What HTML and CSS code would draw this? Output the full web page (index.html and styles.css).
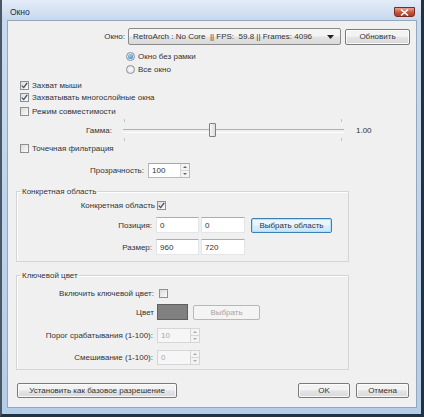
FILE: index.html
```html
<!DOCTYPE html>
<html lang="ru">
<head>
    <meta charset="UTF-8">
    <title>Окно</title>
    <link rel="stylesheet" href="styles.css">
</head>
<body>
    <div class="window">
        <div class="titlebar">
            <span class="title">Окно</span>
            <span class="close">
                <svg width="9" height="7" viewBox="0 0 9 7"><path d="M1 0.5 L8 6.5 M8 0.5 L1 6.5" stroke="#fff" stroke-width="1.6"/></svg>
            </span>
        </div>

        <div class="client">
            <!-- выбор окна -->
            <div class="row row-combo">
                <span class="lbl lbl-window">Окно:</span>
                <div class="combo">
                    <span>RetroArch : No Core&nbsp; || FPS:&nbsp; 59.8 || Frames: 4096</span>
                    <svg width="7" height="4" viewBox="0 0 7 4"><path d="M0 0 H7 L3.5 4 Z" fill="#222"/></svg>
                </div>
                <button class="btn btn-refresh">Обновить</button>
            </div>

            <div class="radios">
                <div class="opt"><span class="radio on"></span>Окно без рамки</div>
                <div class="opt"><span class="radio"></span>Все окно</div>
            </div>

            <div class="checks">
                <div class="opt"><span class="check on"><svg width="7" height="7" viewBox="0 0 7 7"><path d="M0.8 3.6 L2.7 5.6 L6.2 0.8" stroke="#3f4c63" stroke-width="1.3" fill="none"/></svg></span>Захват мыши</div>
                <div class="opt"><span class="check on"><svg width="7" height="7" viewBox="0 0 7 7"><path d="M0.8 3.6 L2.7 5.6 L6.2 0.8" stroke="#3f4c63" stroke-width="1.3" fill="none"/></svg></span>Захватывать многослойные окна</div>
                <div class="opt opt-gap"><span class="check"></span>Режим совместимости</div>
            </div>

            <!-- гамма -->
            <div class="row row-gamma">
                <span class="lbl lbl-gamma">Гамма:</span>
                <div class="slider">
                    <span class="thumb"></span>
                </div>
                <span class="slider-val">1.00</span>
            </div>

            <div class="opt opt-filter"><span class="check"></span>Точечная фильтрация</div>

            <div class="row row-opacity">
                <span class="lbl lbl-opacity">Прозрачность:</span>
                <div class="spin">
                    <span class="val">100</span>
                    <div class="arrows">
                        <span class="up"></span>
                        <span class="down"></span>
                    </div>
                </div>
            </div>

            <!-- конкретная область -->
            <fieldset class="group group-area">
                <legend>Конкретная область</legend>
                <div class="row row-area-check">
                    <span class="lbl lbl-area">Конкретная область</span>
                    <span class="check on"><svg width="7" height="7" viewBox="0 0 7 7"><path d="M0.8 3.6 L2.7 5.6 L6.2 0.8" stroke="#3f4c63" stroke-width="1.3" fill="none"/></svg></span>
                </div>
                <div class="row row-field">
                    <span class="lbl lbl-pos">Позиция:</span>
                    <span class="field f-x">0</span>
                    <span class="field f-y">0</span>
                    <button class="btn btn-focus btn-area">Выбрать область</button>
                </div>
                <div class="row row-field">
                    <span class="lbl lbl-pos">Размер:</span>
                    <span class="field f-x">960</span>
                    <span class="field f-y">720</span>
                </div>
            </fieldset>

            <!-- ключевой цвет -->
            <fieldset class="group group-key">
                <legend>Ключевой цвет</legend>
                <div class="row row-key-check">
                    <span class="lbl lbl-key">Включить ключевой цвет:</span>
                    <span class="check"></span>
                </div>
                <div class="row row-color">
                    <span class="lbl lbl-color">Цвет</span>
                    <span class="swatch"></span>
                    <button class="btn btn-pick" disabled>Выбрать</button>
                </div>
                <div class="row row-spin row-threshold">
                    <span class="lbl lbl-num">Порог срабатывания (1-100):</span>
                    <div class="spin spin-off">
                        <span class="val">10</span>
                        <div class="arrows">
                            <span class="up"></span>
                            <span class="down"></span>
                        </div>
                    </div>
                </div>
                <div class="row row-spin row-blend">
                    <span class="lbl lbl-num">Смешивание (1-100):</span>
                    <div class="spin spin-off">
                        <span class="val">0</span>
                        <div class="arrows">
                            <span class="up"></span>
                            <span class="down"></span>
                        </div>
                    </div>
                </div>
            </fieldset>

            <div class="row row-bottom">
                <button class="btn btn-base">Установить как базовое разрешение</button>
                <button class="btn btn-ok">OK</button>
                <button class="btn btn-cancel">Отмена</button>
            </div>
        </div>
    </div>
</body>
</html>
```

FILE: styles.css
```css
* {
    margin: 0;
    padding: 0;
    box-sizing: border-box;
}

body {
    width: 424px;
    height: 417px;
    overflow: hidden;
    font-family: 'Liberation Sans', Arial, sans-serif;
    font-size: 8px;
    color: #333;
    background: #2a3a48;
}

/* рамка окна */
.window {
    width: 424px;
    height: 417px;
    background: linear-gradient(#c9dbef, #b4cde8);
    border-left: 2px solid #4a5866;
    border-right: 3px solid #23323f;
    border-bottom: 3px solid #23323f;
    display: flex;
    flex-direction: column;
}

.titlebar {
    height: 20px;
    display: flex;
    align-items: flex-start;
    padding-left: 8px;
    background: linear-gradient(#e3ecf7, #c7d9ee);
}

.title {
    font-size: 8.5px;
    color: #1a2a3a;
    margin-top: 7px;
}

.close {
    margin-left: auto;
    margin-right: 6px;
    margin-top: 7px;
    width: 21px;
    height: 10px;
    border: 1px solid #7a2b22;
    border-radius: 0 0 3px 3px;
    background: linear-gradient(#e8a493, #c9533a 55%, #b53a22);
    display: flex;
    align-items: center;
    justify-content: center;
}

.client {
    margin: 0 4px 0 5px;
    height: 388px;
    background: #f0f0f0;
    border: 1px solid #94a7bc;
    padding-top: 7px;
}

/* строки */
.row {
    display: flex;
    align-items: center;
}

.lbl {
    text-align: right;
    white-space: nowrap;
    flex-shrink: 0;
}

.row-combo {
    height: 17px;
}

.lbl-window {
    width: 117px;
    margin-right: 3px;
}

.combo {
    width: 213px;
    height: 17px;
    border: 1px solid #8a8a8a;
    border-radius: 2px;
    background: linear-gradient(#f4f4f4 45%, #e2e2e2 55%, #dadada);
    display: flex;
    align-items: center;
    justify-content: space-between;
    padding: 0 6px 0 4px;
    white-space: nowrap;
}

.btn {
    font-family: 'Liberation Sans', Arial, sans-serif;
    font-size: 8px;
    color: #333;
    height: 15px;
    border: 1px solid #7a7a7a;
    border-radius: 2px;
    background: linear-gradient(#f3f3f3 45%, #e4e4e4 52%, #d9d9d9);
    box-shadow: inset 0 0 0 1px rgba(255,255,255,0.8);
    flex-shrink: 0;
}

.btn-refresh {
    width: 65px;
    height: 16px;
    margin-left: 4px;
}

.btn-focus {
    border-color: #3c7fb1;
    box-shadow: inset 0 0 0 1px #b8dff5;
    background: linear-gradient(#eaf6fd 45%, #d9f0fc 52%, #c6e5f7);
}

.btn:disabled {
    color: #a4a4a4;
    border-color: #b8b8b8;
    background: #f4f4f4;
    box-shadow: none;
}

/* радио и флажки */
.radios {
    margin-top: 5px;
    padding-left: 118px;
}

.opt {
    height: 13px;
    display: flex;
    align-items: center;
    white-space: nowrap;
}

.radio {
    width: 9px;
    height: 9px;
    border-radius: 50%;
    border: 1px solid #8a8f96;
    background: radial-gradient(#fdfdfd, #dcdcdc);
    margin-right: 3px;
    display: flex;
    align-items: center;
    justify-content: center;
}

.radio.on::after {
    content: "";
    width: 5px;
    height: 5px;
    border-radius: 50%;
    background: radial-gradient(circle at 40% 35%, #9ad3f4, #2a74b5);
}

.check {
    width: 9px;
    height: 9px;
    border: 1px solid #8e8f8f;
    background: linear-gradient(135deg, #dcdcdc, #fbfbfb);
    margin-right: 3px;
    display: flex;
    align-items: center;
    justify-content: center;
    flex-shrink: 0;
}

.checks {
    margin-top: 3px;
    padding-left: 12px;
}

.checks .opt {
    height: 12px;
}

.checks .opt-gap {
    margin-top: 2px;
}

/* гамма */
.row-gamma {
    height: 16px;
    margin-top: 5px;
}

.lbl-gamma {
    width: 104px;
    margin-right: 11px;
}

.slider {
    position: relative;
    width: 221px;
    height: 16px;
}

.slider::before {
    content: "";
    position: absolute;
    left: 0;
    right: 0;
    top: 7px;
    height: 2px;
    border-top: 1px solid #b0b0b0;
    border-bottom: 1px solid #fff;
}

.slider::after {
    content: "";
    position: absolute;
    left: 1px;
    right: 2px;
    top: -3px;
    height: 22px;
    border-left: 1px solid #c4c4c4;
    border-right: 1px solid #c4c4c4;
    clip-path: polygon(0 0, 100% 0, 100% 3px, 0 3px, 0 19px, 100% 19px, 100% 100%, 0 100%);
}

.thumb {
    position: absolute;
    left: 86px;
    top: 1px;
    width: 7px;
    height: 14px;
    border: 1px solid #7f7f7f;
    border-radius: 1px;
    background: linear-gradient(90deg, #f7f7f7, #dcdcdc);
    z-index: 1;
}

.slider-val {
    margin-left: 12px;
}

.opt-filter {
    margin-top: 4px;
    padding-left: 12px;
}

/* прозрачность */
.row-opacity {
    height: 15px;
    margin-top: 8px;
}

.lbl-opacity {
    width: 136px;
    margin-right: 4px;
}

.spin {
    height: 15px;
    width: 42px;
    display: flex;
    background: #fff;
    border: 1px solid #b5b9c0;
    border-top-color: #a3a7ae;
}

.spin .val {
    flex: 1;
    padding-left: 3px;
    display: flex;
    align-items: center;
}

.arrows {
    width: 9px;
    display: flex;
    flex-direction: column;
    border-left: 1px solid #d6d6d6;
}

.arrows span {
    flex: 1;
    display: flex;
    align-items: center;
    justify-content: center;
    background: #f4f4f4;
}

.arrows .up {
    border-bottom: 1px solid #d6d6d6;
}

.arrows span::after {
    content: "";
    border-left: 2px solid transparent;
    border-right: 2px solid transparent;
}

.arrows .up::after {
    border-bottom: 2px solid #666;
}

.arrows .down::after {
    border-top: 2px solid #666;
}

.spin-off {
    color: #a8a8a8;
    border-color: #d3d6da;
    background: #f6f6f6;
}

.spin-off .arrows span::after {
    border-top-color: #aaa;
    border-bottom-color: #aaa;
}

/* группы */
.group {
    margin-left: 8px;
    width: 333px;
    border: 1px solid #d5d5d5;
    box-shadow: inset 1px 1px 0 #fff;
    padding: 0 0 0 0;
}

.group legend {
    margin-left: 4px;
    padding: 0 1px;
    line-height: 11px;
}

.group-area {
    margin-top: 8px;
    padding-bottom: 6px;
}

.row-area-check {
    height: 12px;
    margin-top: 2px;
}

.lbl-area {
    width: 138px;
    margin-right: 2px;
}

.row-field {
    height: 16px;
    margin-top: 6px;
}

.lbl-pos {
    width: 135px;
    margin-right: 4px;
}

.field {
    height: 16px;
    background: #fff;
    border: 1px solid #e2e6eb;
    border-top-color: #abadb3;
    padding-left: 3px;
    display: flex;
    align-items: center;
}

.f-x {
    width: 43px;
}

.f-y {
    width: 44px;
    margin-left: 2px;
}

.btn-area {
    width: 81px;
    margin-left: 6px;
}

.group-key {
    margin-top: 8px;
    padding-bottom: 4px;
}

.row-key-check {
    height: 12px;
    margin-top: 6px;
}

.lbl-key {
    width: 137px;
    margin-right: 5px;
}

.row-color {
    height: 16px;
    margin-top: 5px;
}

.lbl-color {
    width: 137px;
    margin-right: 3px;
}

.swatch {
    width: 31px;
    height: 16px;
    background: #808080;
    border: 1px solid #5f5f5f;
}

.btn-pick {
    width: 67px;
    margin-left: 5px;
}

.row-spin {
    height: 15px;
}

.row-threshold {
    margin-top: 8px;
}

.row-blend {
    margin-top: 7px;
}

.lbl-num {
    width: 136px;
    margin-right: 4px;
}

.row-spin .spin {
    width: 43px;
}

/* нижние кнопки */
.row-bottom {
    margin-top: 13px;
    padding-left: 9px;
    padding-right: 7px;
}

.btn-base {
    width: 160px;
}

.btn-ok {
    width: 52px;
    margin-left: auto;
}

.btn-cancel {
    width: 53px;
    margin-left: 6px;
}
```
